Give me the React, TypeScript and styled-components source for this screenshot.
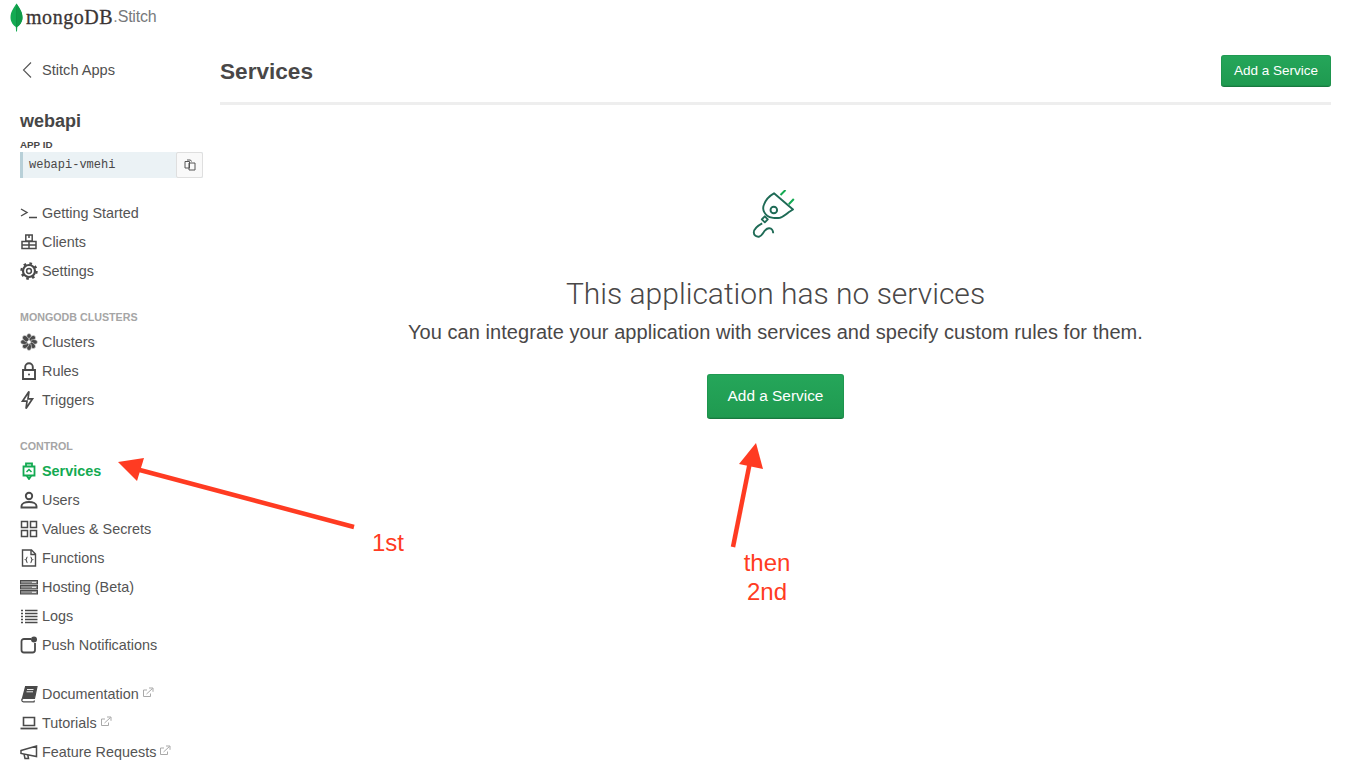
import styled, { createGlobalStyle } from 'styled-components';
import type { ReactNode } from 'react';

const GlobalStyle = createGlobalStyle`
  html, body {
    margin: 0;
    padding: 0;
    background: #fff;
    overflow: hidden;
  }
  body {
    font-family: "Liberation Sans", Arial, sans-serif;
    color: #494747;
  }
`;

const Page = styled.div`
  position: relative;
  width: 1347px;
  height: 776px;
  overflow: hidden;
`;

const LogoBar = styled.div`
  height: 34px;
  padding-left: 10px;
  display: flex;
  align-items: center;
`;

const LogoWord = styled.span`
  font-family: "Liberation Serif", serif;
  font-size: 20px;
  font-weight: 400;
  color: #3b3535;
  margin-left: 3px;
  letter-spacing: 0.55px;
  -webkit-text-stroke: 0.3px #3b3535;
`;

const LogoDot = styled.span`
  font-size: 16px;
  color: #8c8c8c;
`;

const LogoProduct = styled.span`
  font-size: 16px;
  color: #77797b;
  letter-spacing: -0.2px;
`;

const Body = styled.div`
  display: flex;
`;

const Sidebar = styled.aside`
  width: 220px;
  flex: none;
  padding-left: 20px;
  box-sizing: border-box;
`;

const BackLink = styled.div`
  display: flex;
  align-items: center;
  height: 24px;
  margin-top: 24px;
  font-size: 14.6px;
  color: #4f4f4f;
  gap: 10px;
  padding-left: 2px;
`;

const AppName = styled.div`
  margin-top: 28px;
  font-size: 18px;
  line-height: 22px;
  font-weight: 700;
  color: #464646;
`;

const FieldLabel = styled.div`
  margin-top: 7px;
  font-size: 9.8px;
  line-height: 11px;
  font-weight: 700;
  color: #494747;
`;

const IdField = styled.div`
  margin-top: 2px;
  width: 183px;
  height: 26px;
  display: flex;
  align-items: center;
  justify-content: space-between;
  box-sizing: border-box;
  background: #ebf2f5;
  border-left: 3px solid #b8d0d8;
`;

const IdText = styled.span`
  font-family: "Liberation Mono", monospace;
  font-size: 12px;
  color: #494747;
  padding-left: 6px;
`;

const CopyButton = styled.div`
  width: 27px;
  height: 26px;
  box-sizing: border-box;
  display: flex;
  align-items: center;
  justify-content: center;
  background: #f9f9f9;
  border: 1px solid #dfdfdf;
  border-radius: 2px;
`;

const NavGroup = styled.nav<{ $top: number }>`
  margin-top: ${props => props.$top}px;
`;

const SectionTitle = styled.div`
  height: 17px;
  line-height: 17px;
  font-size: 10.7px;
  font-weight: 700;
  color: #a5a5a5;
  margin-bottom: 1px;
`;

const NavRow = styled.div<{ $active?: boolean }>`
  height: 29px;
  display: flex;
  align-items: center;
  font-size: 14.4px;
  color: ${props => (props.$active ? '#13aa52' : '#545454')};
  font-weight: ${props => (props.$active ? 700 : 400)};
`;

const NavIcon = styled.span`
  width: 22px;
  flex: none;
  display: flex;
  align-items: center;
`;

const ExternalMark = styled.span`
  display: flex;
  margin-left: 3px;
  margin-top: -3px;
`;

const Main = styled.main`
  width: 1111px;
  flex: none;
`;

const Header = styled.header`
  height: 62px;
  padding-top: 6px;
  display: flex;
  align-items: center;
  justify-content: space-between;
  border-bottom: 3px solid #eeeeee;
`;

const Title = styled.h1`
  margin: 0;
  font-size: 22.6px;
  font-weight: 700;
  color: #494747;
  position: relative;
  top: 1px;
`;

const GreenButton = styled.div<{ $large?: boolean }>`
  width: ${props => (props.$large ? 137 : 110)}px;
  height: ${props => (props.$large ? 45 : 32)}px;
  display: flex;
  align-items: center;
  justify-content: center;
  box-sizing: border-box;
  border-radius: 3px;
  color: #fff;
  font-size: ${props => (props.$large ? 15.4 : 13.5)}px;
  background: linear-gradient(#25a65a, #1f9a50);
  border-bottom: 1px solid #18793f;
  box-shadow: inset 0 0 0 1px rgba(20, 120, 60, 0.25);
`;

const Empty = styled.section`
  display: flex;
  flex-direction: column;
  align-items: center;
  padding-top: 85px;
`;

const EmptyIcon = styled.div`
  height: 50px;
  display: flex;
`;

const EmptyTitle = styled.h2`
  margin: 34px 0 0;
  font-family: Roboto, "Liberation Sans", sans-serif;
  font-size: 30px;
  line-height: 40px;
  font-weight: 300;
  color: #494747;
`;

const EmptyText = styled.p`
  margin: 6px 0 0;
  font-size: 20px;
  letter-spacing: 0.05px;
  line-height: 24px;
  color: #494747;
`;

const EmptyAction = styled.div`
  margin-top: 30px;
`;

const AnnotationLayer = styled.svg`
  position: absolute;
  left: 0;
  top: 0;
  pointer-events: none;
`;

const Note = styled.div<{ $x: number; $y: number }>`
  position: absolute;
  left: ${props => props.$x}px;
  top: ${props => props.$y}px;
  width: 80px;
  text-align: center;
  font-size: 24px;
  line-height: 29px;
  color: #ff3b22;
`;

const G = ({ children, size = 18, w = 18 }: { children: ReactNode; size?: number; w?: number }) => (
  <svg width={w} height={size} viewBox={`0 0 ${w} ${size}`} fill="none" stroke="#4a4a4a" strokeWidth="1.7">
    {children}
  </svg>
);

const Leaf = () => (
  <svg width="13" height="29" viewBox="0 0 13 29">
    <path d="M6.5 0.5C4.5 4 0.5 8 0.5 14.5 0.5 19 3.5 22.5 5.8 24L6.1 28.5H7L7.3 24C9.5 22.5 12.5 19 12.5 14.5 12.5 8 8.5 4 6.5 0.5Z" fill="#13aa52" />
    <path d="M6.5 4V24.5" stroke="#0e8a42" strokeWidth="0.8" />
    <path d="M6.5 0.5C8.5 4 12.5 8 12.5 14.5 12.5 19 9.5 22.5 7.3 24L6.5 10Z" fill="#0f9a48" />
  </svg>
);

const ExternalIcon = () => (
  <svg width="12" height="11" viewBox="0 0 12 11" fill="none" stroke="#a9a9a9" strokeWidth="1">
    <path d="M8.5 6.5V9.5H1.5V3H5" />
    <path d="M4.5 7L10.5 1.5M7 1H11V4.8" />
  </svg>
);

const petals = [0, 45, 90, 135, 180, 225, 270, 315];

const icons: Record<string, ReactNode> = {
  terminal: (
    <G>
      <path d="M1 5L7 8.5L1 12M9 13.5H17" strokeWidth="1.4" />
    </G>
  ),
  clients: (
    <G>
      <path d="M5.8 2H12.2V8H5.8ZM9 2V5M2 8.5H9V15.5H2ZM9 8.5H16V15.5H9ZM2 12H16" strokeWidth="1.5" />
    </G>
  ),
  settings: (
    <G>
      <circle cx="9" cy="9" r="6" strokeWidth="2.2" />
      <circle cx="9" cy="9" r="7.6" strokeWidth="2.2" strokeDasharray="2.6 3.4" />
      <circle cx="9" cy="9" r="2.4" strokeWidth="1.5" />
    </G>
  ),
  clusters: (
    <G>
      {petals.map(angle => (
        <ellipse
          key={angle}
          cx="9"
          cy="4.2"
          rx="2.5"
          ry="3.7"
          fill="#4a4a4a"
          stroke="#fff"
          strokeWidth="0.5"
          transform={`rotate(${angle} 9 9)`}
        />
      ))}
      <circle cx="9" cy="9" r="1.6" fill="#fff" stroke="none" />
    </G>
  ),
  rules: (
    <G>
      <path d="M3 8H15V17H3ZM5.2 8V5A3.8 3.8 0 0 1 12.8 5V8" strokeWidth="1.9" />
      <circle cx="9" cy="12.6" r="1" fill="#4a4a4a" stroke="none" />
    </G>
  ),
  triggers: (
    <G>
      <path d="M10.5 0.5L4 10.2H8.5L7.5 17.5L14 7.8H9.5Z" strokeWidth="1.7" transform="translate(-1.5 0)" />
    </G>
  ),
  services: (
    <svg width="18" height="18" viewBox="0 0 18 18" fill="none" stroke="#13aa52" strokeWidth="1.8">
      <path d="M6 4.5V1.5H12V4.5M3.5 4.5H14.5V13.5H3.5ZM6.5 13.5L9 17L11.5 13.5" />
      <path d="M6.5 10L9 7.5L11.5 10" strokeWidth="1.5" />
    </svg>
  ),
  users: (
    <G>
      <circle cx="9" cy="5" r="3.2" strokeWidth="1.9" />
      <path d="M1.5 16.5V15C1.5 12.5 5 11 9 11S16.5 12.5 16.5 15V16.5Z" strokeWidth="1.9" />
    </G>
  ),
  values: (
    <G>
      <path d="M1.5 1.5H7.5V7.5H1.5ZM10.5 1.5H16.5V7.5H10.5ZM1.5 10.5H7.5V16.5H1.5ZM10.5 10.5H16.5V16.5H10.5Z" strokeWidth="1.5" />
    </G>
  ),
  functions: (
    <G>
      <path d="M2.5 1H11.5L15.5 5V17H2.5ZM11 1V5.5H15.5" strokeWidth="1.4" />
      <path d="M7.5 8C6.3 8 6.8 10.5 5.8 10.8C6.8 11.1 6.3 13.6 7.5 13.6M10.5 8C11.7 8 11.2 10.5 12.2 10.8C11.2 11.1 11.7 13.6 10.5 13.6" strokeWidth="1.1" />
    </G>
  ),
  hosting: (
    <G>
      <path d="M0.5 2.5H17.5V6H0.5ZM0.5 7.5H17.5V11H0.5ZM0.5 12.5H17.5V16H0.5Z" strokeWidth="1.1" fill="#8a8a8a" />
      <path d="M12 4.3H16M12 9.3H16M12 14.3H16" stroke="#fff" strokeWidth="0.9" />
    </G>
  ),
  logs: (
    <G>
      <path d="M5 3.5H17.5M5 6.5H17.5M5 9.5H17.5M5 12.5H17.5M5 15.5H17.5" strokeWidth="1.3" />
      <path d="M1 3.5H3M1 6.5H3M1 9.5H3M1 12.5H3M1 15.5H3" strokeWidth="1.3" />
    </G>
  ),
  push: (
    <G>
      <path d="M11 3H4A2.5 2.5 0 0 0 1.5 5.5V14A2.5 2.5 0 0 0 4 16.5H12.5A2.5 2.5 0 0 0 15 14V7" strokeWidth="1.8" />
      <circle cx="14" cy="3.5" r="3" fill="#4a4a4a" stroke="none" />
    </G>
  ),
  docs: (
    <G>
      <path d="M5 1.5H17L14.5 13.5H3.5C2 13.5 1.5 15 2 16 2.3 16.6 3 16.8 3.5 16.8H14L14.5 15.5" strokeWidth="1.2" />
      <path d="M5 1.5H17L14.5 13H3.2L1.4 15Z" fill="#4a4a4a" stroke="none" />
      <path d="M7 4.5H13.5M6.5 6.8H13" stroke="#fff" strokeWidth="0.9" />
    </G>
  ),
  tutorials: (
    <G>
      <path d="M3.5 3.5H14.5V11.5H3.5Z" strokeWidth="1.6" />
      <path d="M0.5 14.5H17.5" strokeWidth="1.8" />
    </G>
  ),
  feature: (
    <G>
      <path d="M1 7.5L16.5 3V13.5L1 10.5ZM4 11L5 15.5H8.5L7.8 12" strokeWidth="1.5" />
    </G>
  ),
};

type Item = { icon: string; label: string; active?: boolean; external?: boolean };

const mainItems: Item[] = [
  { icon: 'terminal', label: 'Getting Started' },
  { icon: 'clients', label: 'Clients' },
  { icon: 'settings', label: 'Settings' },
];

const clusterItems: Item[] = [
  { icon: 'clusters', label: 'Clusters' },
  { icon: 'rules', label: 'Rules' },
  { icon: 'triggers', label: 'Triggers' },
];

const controlItems: Item[] = [
  { icon: 'services', label: 'Services', active: true },
  { icon: 'users', label: 'Users' },
  { icon: 'values', label: 'Values & Secrets' },
  { icon: 'functions', label: 'Functions' },
  { icon: 'hosting', label: 'Hosting (Beta)' },
  { icon: 'logs', label: 'Logs' },
  { icon: 'push', label: 'Push Notifications' },
];

const linkItems: Item[] = [
  { icon: 'docs', label: 'Documentation', external: true },
  { icon: 'tutorials', label: 'Tutorials', external: true },
  { icon: 'feature', label: 'Feature Requests', external: true },
];

const NavItems = ({ items }: { items: Item[] }) => (
  <>
    {items.map(item => (
      <NavRow key={item.label} $active={item.active}>
        <NavIcon>{icons[item.icon]}</NavIcon>
        {item.label}
        {item.external && (
          <ExternalMark>
            <ExternalIcon />
          </ExternalMark>
        )}
      </NavRow>
    ))}
  </>
);

const App = () => {
  return (
    <Page>
      <GlobalStyle />
      <LogoBar>
        <Leaf />
        <LogoWord>mongoDB</LogoWord>
        <LogoDot>.</LogoDot>
        <LogoProduct>Stitch</LogoProduct>
      </LogoBar>
      <Body>
        <Sidebar>
          <BackLink>
            <svg width="10" height="18" viewBox="0 0 10 18" fill="none" stroke="#555" strokeWidth="1.1">
              <path d="M9 1.5L1.5 9L9 16.5" />
            </svg>
            Stitch Apps
          </BackLink>
          <AppName>webapi</AppName>
          <FieldLabel>APP ID</FieldLabel>
          <IdField>
            <IdText>webapi-vmehi</IdText>
            <CopyButton>
              <svg width="12" height="12" viewBox="0 0 12 12" fill="none" stroke="#555" strokeWidth="1">
                <path d="M1 2.5H5.5V9H1ZM5 4H11V11H5ZM3 1H6.5L7.5 2.5" />
              </svg>
            </CopyButton>
          </IdField>
          <NavGroup $top={20}>
            <NavItems items={mainItems} />
          </NavGroup>
          <NavGroup $top={24}>
            <SectionTitle>MONGODB CLUSTERS</SectionTitle>
            <NavItems items={clusterItems} />
          </NavGroup>
          <NavGroup $top={24}>
            <SectionTitle>CONTROL</SectionTitle>
            <NavItems items={controlItems} />
          </NavGroup>
          <NavGroup $top={20}>
            <NavItems items={linkItems} />
          </NavGroup>
        </Sidebar>
        <Main>
          <Header>
            <Title>Services</Title>
            <GreenButton>Add a Service</GreenButton>
          </Header>
          <Empty>
            <EmptyIcon>
              <svg width="50" height="50" viewBox="0 0 50 50" fill="none" stroke="#1f6b56" strokeWidth="1.9" strokeLinejoin="round">
                <path d="M29.5 5L34.5 0M37.8 14.3L42.8 9" stroke="#13aa52" strokeWidth="2" />
                <path d="M23 3.3L42 19.5L38 22C35 24.5 32 27 29 27.7C25 28.5 19 28 16.2 25.7C12.5 22.5 11.5 18.5 12.8 15C14.5 10 18 6 23 3.3Z" />
                <circle cx="22.8" cy="20" r="3.3" />
                <path d="M13.8 26.3L16.8 29.3L13.8 32.3L10.8 29.3Z" />
                <path d="M11.2 33.3C7 35.5 2.8 38 2.8 42.5C2.8 45.5 5.5 47 8 46.7C11 46.2 12.5 41.5 14.5 40C16.5 38 19.5 37.5 21 39.5C22 40.8 22.2 42 22.2 43.3" />
              </svg>
            </EmptyIcon>
            <EmptyTitle>This application has no services</EmptyTitle>
            <EmptyText>You can integrate your application with services and specify custom rules for them.</EmptyText>
            <EmptyAction>
              <GreenButton $large>Add a Service</GreenButton>
            </EmptyAction>
          </Empty>
        </Main>
      </Body>
      <AnnotationLayer width="1347" height="776" viewBox="0 0 1347 776">
        <path d="M354 527L136 469" stroke="#ff3b22" strokeWidth="4.5" />
        <path d="M118 462L144 458L137 481Z" fill="#ff3b22" />
        <path d="M733 547L750 462" stroke="#ff3b22" strokeWidth="4.5" />
        <path d="M756 443L739 464L763 469Z" fill="#ff3b22" />
      </AnnotationLayer>
      <Note $x={348} $y={528}>1st</Note>
      <Note $x={727} $y={548}>then<br />2nd</Note>
    </Page>
  );
};

export default App;
